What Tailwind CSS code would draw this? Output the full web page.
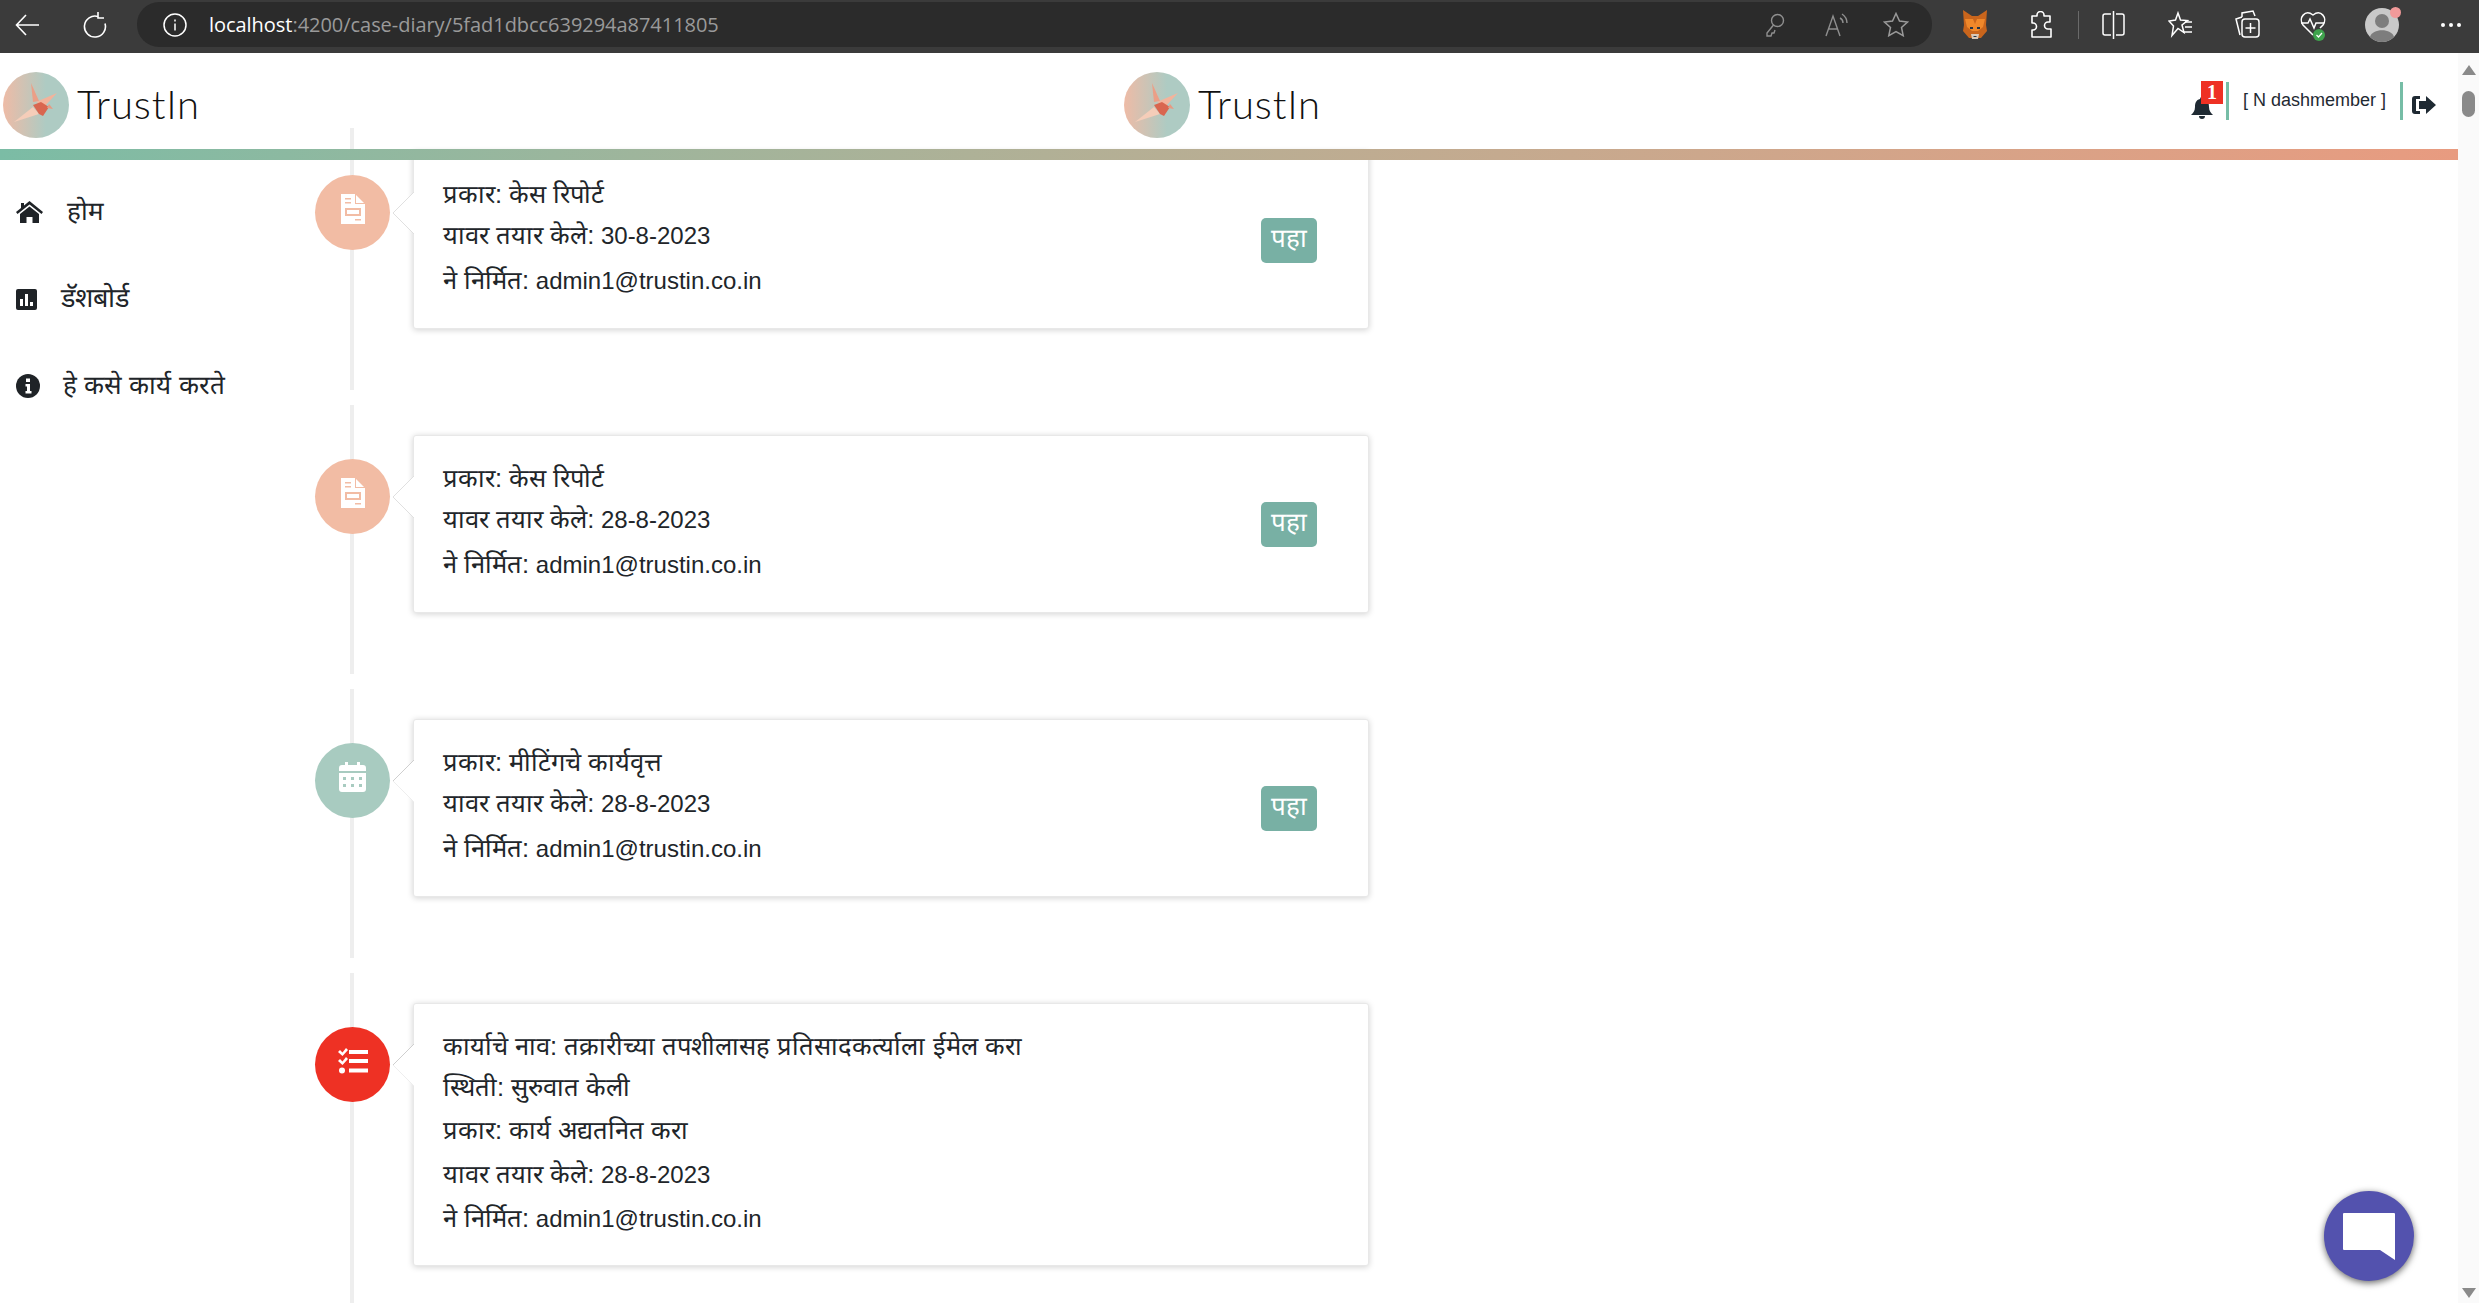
<!DOCTYPE html>
<html><head><meta charset="utf-8"><script src="https://cdn.jsdelivr.net/npm/@tailwindcss/browser@4"></script></head>
<body class="bg-white overflow-hidden">
<div class="w-[2479px] h-[1303px] overflow-hidden flex flex-col relative font-['Liberation_Sans',sans-serif] text-[#212529]">
  <!-- browser chrome -->
  <div class="h-[53px] shrink-0 bg-[#3b3b3b] flex items-center pb-[4px] text-white">
    <svg class="ml-[15px] w-[25px] h-[24px]" viewBox="0 0 25 24" fill="none" stroke="#fff" stroke-width="1.6"><path d="M24 12H2M11 2 1.5 12 11 22"/></svg>
    <svg class="ml-[42px] w-[25px] h-[26px]" viewBox="0 0 25 26" fill="none" stroke="#fff" stroke-width="1.6"><path d="M16 4.5a10.5 10.5 0 1 0 7 7"/><path d="M16 0v6h6"/></svg>
    <div class="ml-[30px] w-[1795px] h-[45px] rounded-[22px] bg-[#2b2b2b] flex items-center">
      <svg class="ml-[26px] w-[24px] h-[24px]" viewBox="0 0 24 24" fill="none" stroke="#fff" stroke-width="1.5"><circle cx="12" cy="12" r="11"/><path d="M12 10.5v7M12 6.5v2"/></svg>
      <span class="ml-[22px] w-[1556px] text-[20px] font-['Open_Sans',sans-serif] tracking-[-0.04px] whitespace-nowrap">localhost<span class="text-[#9a9a9a]">:4200/case-diary/5fad1dbcc639294a87411805</span></span>
      <svg class="w-[20px] h-[24px]" viewBox="0 0 20 24" fill="none" stroke="#8f8f8f" stroke-width="1.4"><circle cx="12.5" cy="7.5" r="6"/><path d="M8.5 12 2 20v3h4l1-3h2l1-3"/></svg>
      <svg class="ml-[40px] w-[24px] h-[24px]" viewBox="0 0 24 24" fill="none" stroke="#8f8f8f" stroke-width="1.4"><path d="M1 23 8 3l7 20M3.5 16h9"/><path d="M15 5c2 1 3 3 3 5M17 1c3 2 5 5 5 9"/></svg>
      <svg class="ml-[34px] w-[26px] h-[25px]" viewBox="0 0 26 25" fill="none" stroke="#9a9a9a" stroke-width="1.5"><path d="m13 1.5 3.5 7.6 8 .9-6 5.500 1.700 8.200L13 19.600 5.800 23.700l1.700-8.200-6-5.500 8-.9z"/></svg>
    </div>
    <svg class="ml-[31px] w-[24px] h-[30px]" viewBox="0 0 24 30"><path fill="#c9651c" d="M0 0 9 6h6l9-6-1 15 1 6-6 7H6l-6-7 1-6z"/><path fill="#f0882a" d="M2 9h8l2 5 2-5h8l-2 8-5 4h-6l-5-4z"/><path fill="#d8c8b8" d="M8 24h8l-1 5H9z"/><path fill="#233447" d="M7 17h3v2H7zM14 17h3v2h-3zM10.500 26h3v1h-3z"/></svg>
    <svg class="ml-[43px] w-[23px] h-[28px]" viewBox="0 0 23 28" fill="none" stroke="#fff" stroke-width="1.6"><path d="M7 5V4a3.500 3.500 0 0 1 7 0v1h6v6h-2a3 3 0 0 0 0 7h3v8H2v-7h1a3 3 0 0 0 0-7H2V5z" stroke-linejoin="round"/></svg>
    <div class="ml-[25px] w-[1px] h-[28px] bg-[#6a6a6a]"></div>
    <svg class="ml-[23px] w-[23px] h-[30px]" viewBox="0 0 23 30" fill="none" stroke="#fff" stroke-width="1.5"><path d="M9 4H3a2 2 0 0 0-2 2v17a2 2 0 0 0 2 2h6M14 4h6a2 2 0 0 1 2 2v17a2 2 0 0 1-2 2h-6M11.500 1v28"/></svg>
    <svg class="ml-[43px] w-[25px] h-[28px]" viewBox="0 0 25 28" fill="none" stroke="#fff" stroke-width="1.5"><path d="m10 2 2.500 7 7 .5-5.500 4.500 2 7.500-6-4-6 7 1.500-9.500L1 10l6.500-1z"/><path d="M17 11h7M17 16h7M15 21h9"/></svg>
    <svg class="ml-[42px] w-[25px] h-[30px]" viewBox="0 0 25 30" fill="none" stroke="#fff" stroke-width="1.500"><path d="M7 7V3l11-2 2 5M5 25 1 9l6-2"/><rect x="7" y="9" width="17" height="18" rx="3"/><path d="M15.500 13v10M10.500 18h10"/></svg>
    <svg class="ml-[40px] w-[26px] h-[34px]" viewBox="0 0 26 34" fill="none" stroke="#fff" stroke-width="1.500"><path d="M13 27 3 17C-2 10 5 1 13 7c8-6 15 3 10 10l-3 3"/><path d="M1 15h7l2-4 4 9 2-5h8"/><circle cx="19" cy="27" r="6" fill="#3fa34d" stroke="none"/><path d="m16.500 27 2 2 3.500-4" stroke-width="1.200"/></svg>
    <div class="ml-[39px] relative w-[34px] h-[34px]">
      <svg class="w-[34px] h-[34px]" viewBox="0 0 34 34"><circle cx="17" cy="17" r="17" fill="#c9c9c9"/><circle cx="17" cy="13" r="7" fill="#7d7d7d"/><path fill="#7d7d7d" d="M5 29c2-9 22-9 24 0a17 17 0 0 1-24 0"/></svg>
      <div class="absolute right-[-2px] top-[-1px] w-[11px] h-[11px] rounded-full bg-[#f19a9a]"></div>
    </div>
    <div class="ml-[42px] flex gap-[4px]"><div class="w-[4px] h-[4px] rounded-full bg-white"></div><div class="w-[4px] h-[4px] rounded-full bg-white"></div><div class="w-[4px] h-[4px] rounded-full bg-white"></div></div>
  </div>

  <div class="flex flex-1 min-h-0">
    <div class="w-[2458px] shrink-0 flex flex-col relative">
      <!-- header -->
      <div class="relative z-10 h-[96px] pt-[8px] shrink-0 flex items-center">
        <div class="ml-[3px] w-[1121px] flex items-center">
          <svg class="w-[66px] h-[66px]" viewBox="0 0 66 66"><defs><linearGradient id="g1"><stop offset="0" stop-color="#eebba6"/><stop offset="0.65" stop-color="#aecbc3"/></linearGradient></defs><circle cx="33" cy="33" r="33" fill="url(#g1)"/><path fill="#f5cdb9" d="m11 50 19-15 6 7z"/><path fill="#eb9f87" d="m28 11 2 19 6-1z"/><path fill="#f3b39b" d="M54 21 33 30l9 4z"/><path fill="#d9664f" d="m30 33 8-3 8 5-6 9-4-2z"/><path fill="#e79a82" d="m46 32 4 5-6-1z"/></svg>
          <span class="ml-[8px] mt-[-3px] text-[40px] tracking-[0.8px] font-light font-['Lato',sans-serif] text-[#111]">TrustIn</span>
        </div>
        <div class="flex items-center">
          <svg class="w-[66px] h-[66px]" viewBox="0 0 66 66"><defs><linearGradient id="g2"><stop offset="0" stop-color="#eebba6"/><stop offset="0.65" stop-color="#aecbc3"/></linearGradient></defs><circle cx="33" cy="33" r="33" fill="url(#g2)"/><path fill="#f5cdb9" d="m11 50 19-15 6 7z"/><path fill="#eb9f87" d="m28 11 2 19 6-1z"/><path fill="#f3b39b" d="M54 21 33 30l9 4z"/><path fill="#d9664f" d="m30 33 8-3 8 5-6 9-4-2z"/><path fill="#e79a82" d="m46 32 4 5-6-1z"/></svg>
          <span class="ml-[8px] mt-[-3px] text-[40px] tracking-[0.8px] font-light font-['Lato',sans-serif] text-[#111]">TrustIn</span>
        </div>
        <div class="ml-auto mr-[22px] flex items-center h-[38px] mt-[-9px]">
          <div class="relative w-[35px] h-[38px]">
            <svg class="absolute left-0 top-[15px] w-[22px] h-[22px]" viewBox="0 0 22 22" fill="#1f2a33"><path d="M11 0a2 2 0 0 1 2 2c4 1 5 4 5 8 0 4 2 6 4 8H0c2-2 4-4 4-8 0-4 1-7 5-8a2 2 0 0 1 2-2M8 19h6a3 3 0 0 1-6 0"/></svg>
            <div class="absolute left-[10px] top-[-1px] w-[22px] h-[23px] bg-[#ee3124] text-white text-[20px] leading-[23px] font-bold text-center font-['Liberation_Serif',serif]">1</div>
          </div>
          <div class="w-[3px] h-[38px] bg-[#76bda6]"></div>
          <span class="ml-[14px] w-[157px] text-[18px] text-[#1f2a33] whitespace-nowrap">[ N dashmember ]</span>
          <div class="w-[3px] h-[38px] bg-[#76bda6]"></div>
          <svg class="ml-[9px] mt-[8px] w-[24px] h-[20px]" viewBox="0 0 24 20" fill="#1f2a33"><path d="M8 1H3a3 3 0 0 0-3 3v12a3 3 0 0 0 3 3h5v-3H4V4h4zM14 1l10 9-10 9v-5H7V6h7z"/></svg>
        </div>
      </div>
      <div class="relative z-10 h-[11px] shrink-0 bg-gradient-to-r from-[#7bbca5] to-[#e89b80]"></div>

      <div class="flex flex-1 min-h-0">
        <!-- sidebar -->
        <nav class="w-[315px] shrink-0 text-[26px]">
          <div class="h-[52px] mt-[26px] flex items-center">
            <svg class="ml-[16px] w-[27px] h-[22px]" viewBox="0 0 27 22" fill="#1f2327"><path d="M13.500 0 27 11l-1.500 2L13.500 3.500 1.500 13 0 11l5-4V2h3v2.600zM13.500 5.500 23 13v9h-6.500v-6h-6v6H4v-9z"/></svg>
            <span class="ml-[24px] mt-[-2px]">होम</span>
          </div>
          <div class="h-[52px] mt-[35px] flex items-center">
            <svg class="ml-[16px] w-[21px] h-[21px]" viewBox="0 0 21 21"><rect width="21" height="21" rx="2" fill="#1f2327"/><path fill="#fff" d="M4 10h3v7H4zM9 5h3v12H9zM14 13h3v4h-3z"/></svg>
            <span class="ml-[24px] mt-[-2px] text-[27px]">डॅशबोर्ड</span>
          </div>
          <div class="h-[52px] mt-[35px] flex items-center">
            <svg class="ml-[16px] w-[24px] h-[24px]" viewBox="0 0 24 24"><circle cx="12" cy="12" r="12" fill="#1f2327"/><path fill="#fff" d="M10 4.500h4v3.500h-4zM9.500 10H14v7h1.500v2.500h-6V17H11v-4.500H9.500z"/></svg>
            <span class="ml-[23px] mt-[-2px]">हे कसे कार्य करते</span>
          </div>
        </nav>
        <!-- timeline -->
        <div class="mt-[-32px] w-[1054px] text-[24px]">
          <!-- item 1 -->
          <div class="relative pl-[98px] pt-[23px] pb-[61px] mb-[15px]">
            <div class="absolute left-[35px] top-0 bottom-0 w-[4px] bg-[#eeeeee]"></div>
            <div class="absolute left-0 top-[47px] w-[75px] h-[75px] pb-[8px] rounded-full bg-[#f2bca4] flex items-center justify-center">
              <svg class="w-[24px] h-[30px]" viewBox="0 0 24 30"><path fill="#fff" d="M0 0h14l10 10v20H0z"/><path fill="#f2bca4" d="M15 0v9h9v1H14V0zM4 4h6v1.500H4zM4 8h6v1.500H4zM4 14h16v8H4zM14 25h6v1.500h-6z"/><path fill="#fff" d="M6 16h12v4H6z"/></svg>
            </div>
            <div class="relative h-[178px] bg-white rounded-[3px] border border-[#e8e8e8] shadow-[0_1px_6px_rgba(0,0,0,0.18)] flex items-center justify-between">
              <svg class="absolute left-[-23px] top-[39px] w-[24px] h-[44px]" viewBox="0 0 24 44"><path d="M24 0 2 22l22 22z" fill="#fff"/><path d="M23 1 2 22l21 21" fill="none" stroke="#e0e0e0"/></svg>
              <div class="pl-[29px] pt-[21px] self-start">
                <div class="h-[42px] leading-[42px]"><span class="text-[25.5px]">प्रकार: केस रिपोर्ट</span></div>
                <div class="h-[41px] leading-[41px]"><span class="text-[25.5px]">यावर तयार केले:</span> 30-8-2023</div>
                <div class="h-[48px] leading-[48px]"><span class="text-[25.5px]">ने निर्मित:</span> admin1@trustin.co.in</div>
              </div>
              <div class="mr-[51px] w-[56px] h-[45px] pb-[4px] rounded-[5px] bg-[#78b0a4] text-white text-[26px] flex items-center justify-center">पहा</div>
            </div>
          </div>
          <!-- item 2 -->
          <div class="relative pl-[98px] pt-[30px] pb-[61px] mb-[15px]">
            <div class="absolute left-[35px] top-0 bottom-0 w-[4px] bg-[#eeeeee]"></div>
            <div class="absolute left-0 top-[54px] w-[75px] h-[75px] pb-[8px] rounded-full bg-[#f2bca4] flex items-center justify-center">
              <svg class="w-[24px] h-[30px]" viewBox="0 0 24 30"><path fill="#fff" d="M0 0h14l10 10v20H0z"/><path fill="#f2bca4" d="M15 0v9h9v1H14V0zM4 4h6v1.500H4zM4 8h6v1.500H4zM4 14h16v8H4zM14 25h6v1.500h-6z"/><path fill="#fff" d="M6 16h12v4H6z"/></svg>
            </div>
            <div class="relative h-[178px] bg-white rounded-[3px] border border-[#e8e8e8] shadow-[0_1px_6px_rgba(0,0,0,0.18)] flex items-center justify-between">
              <svg class="absolute left-[-23px] top-[39px] w-[24px] h-[44px]" viewBox="0 0 24 44"><path d="M24 0 2 22l22 22z" fill="#fff"/><path d="M23 1 2 22l21 21" fill="none" stroke="#e0e0e0"/></svg>
              <div class="pl-[29px] pt-[21px] self-start">
                <div class="h-[42px] leading-[42px]"><span class="text-[25.5px]">प्रकार: केस रिपोर्ट</span></div>
                <div class="h-[41px] leading-[41px]"><span class="text-[25.5px]">यावर तयार केले:</span> 28-8-2023</div>
                <div class="h-[48px] leading-[48px]"><span class="text-[25.5px]">ने निर्मित:</span> admin1@trustin.co.in</div>
              </div>
              <div class="mr-[51px] w-[56px] h-[45px] pb-[4px] rounded-[5px] bg-[#78b0a4] text-white text-[26px] flex items-center justify-center">पहा</div>
            </div>
          </div>
          <!-- item 3 -->
          <div class="relative pl-[98px] pt-[30px] pb-[61px] mb-[15px]">
            <div class="absolute left-[35px] top-0 bottom-0 w-[4px] bg-[#eeeeee]"></div>
            <div class="absolute left-0 top-[54px] w-[75px] h-[75px] pb-[7px] rounded-full bg-[#a8cbc0] flex items-center justify-center">
              <svg class="w-[27px] h-[30px]" viewBox="0 0 27 30"><path fill="#fff" d="M6 0h3v3h9V0h3v3h3a3 3 0 0 1 3 3v3H0V6a3 3 0 0 1 3-3h3zM0 11h27v16a3 3 0 0 1-3 3H3a3 3 0 0 1-3-3z"/><path fill="#a8cbc0" d="M4 15h3v3H4zM12 15h3v3h-3zM20 15h3v3h-3zM4 22h3v3H4zM12 22h3v3h-3zM20 22h3v3h-3z"/></svg>
            </div>
            <div class="relative h-[178px] bg-white rounded-[3px] border border-[#e8e8e8] shadow-[0_1px_6px_rgba(0,0,0,0.18)] flex items-center justify-between">
              <svg class="absolute left-[-23px] top-[39px] w-[24px] h-[44px]" viewBox="0 0 24 44"><path d="M24 0 2 22l22 22z" fill="#fff"/><path d="M23 1 2 22" fill="none" stroke="#cfcfcf"/><path d="M2 22l21 21" fill="none" stroke="#eeeeee"/></svg>
              <div class="pl-[29px] pt-[21px] self-start">
                <div class="h-[42px] leading-[42px]"><span class="text-[25.5px]">प्रकार: मीटिंगचे कार्यवृत्त</span></div>
                <div class="h-[41px] leading-[41px]"><span class="text-[25.5px]">यावर तयार केले:</span> 28-8-2023</div>
                <div class="h-[48px] leading-[48px]"><span class="text-[25.5px]">ने निर्मित:</span> admin1@trustin.co.in</div>
              </div>
              <div class="mr-[51px] w-[56px] h-[45px] pb-[4px] rounded-[5px] bg-[#78b0a4] text-white text-[26px] flex items-center justify-center">पहा</div>
            </div>
          </div>
          <!-- item 4 -->
          <div class="relative pl-[98px] pt-[30px] pb-[61px]">
            <div class="absolute left-[35px] top-0 bottom-0 w-[4px] bg-[#eeeeee]"></div>
            <div class="absolute left-0 top-[54px] w-[75px] h-[75px] pb-[7px] rounded-full bg-[#ee3124] flex items-center justify-center">
              <svg class="w-[30px] h-[26px]" viewBox="0 0 30 26" fill="#fff"><path d="M0 4 2 2l2.500 2.500L8 0l2 2-5.500 6zM0 13l2-2 2.500 2.500L8 9l2 2-5.500 6zM11 2h19v4H11zM11 11h19v4H11zM11 20.500h19v4H11z"/><circle cx="4" cy="22.500" r="3"/></svg>
            </div>
            <div class="relative h-[263px] bg-white rounded-[3px] border border-[#e8e8e8] shadow-[0_1px_6px_rgba(0,0,0,0.18)]">
              <svg class="absolute left-[-23px] top-[39px] w-[24px] h-[44px]" viewBox="0 0 24 44"><path d="M24 0 2 22l22 22z" fill="#fff"/><path d="M23 1 2 22" fill="none" stroke="#cfcfcf"/><path d="M2 22l21 21" fill="none" stroke="#eeeeee"/></svg>
              <div class="pl-[29px] pt-[21px]">
                <div class="h-[42px] leading-[42px]"><span class="text-[25.5px]">कार्याचे नाव: तक्रारीच्या तपशीलासह प्रतिसादकर्त्याला ईमेल करा</span></div>
                <div class="h-[41px] leading-[41px]"><span class="text-[25.5px]">स्थिती: सुरुवात केली</span></div>
                <div class="h-[44px] leading-[44px]"><span class="text-[25.5px]">प्रकार: कार्य अद्यतनित करा</span></div>
                <div class="h-[45px] leading-[45px]"><span class="text-[25.5px]">यावर तयार केले:</span> 28-8-2023</div>
                <div class="h-[42px] leading-[42px]"><span class="text-[25.5px]">ने निर्मित:</span> admin1@trustin.co.in</div>
              </div>
            </div>
          </div>
        </div>
      </div>
    </div>
    <!-- scrollbar -->
    <div class="w-[21px] shrink-0 bg-[#fafafa] flex flex-col items-center">
      <div class="mt-[12px] w-0 h-0 border-l-[7px] border-r-[7px] border-b-[10px] border-l-transparent border-r-transparent border-b-[#8a8a8a]"></div>
      <div class="mt-[16px] w-[13px] h-[26px] rounded-[7px] bg-[#8a8a8a]"></div>
      <div class="mt-auto mb-[5px] w-0 h-0 border-l-[7px] border-r-[7px] border-t-[10px] border-l-transparent border-r-transparent border-t-[#8a8a8a]"></div>
    </div>
  </div>
  <!-- chat -->
  <div class="absolute left-[2324px] top-[1191px] w-[90px] h-[90px] rounded-full bg-[#5352ae] shadow-[0_2px_7px_rgba(0,0,0,0.6)] flex items-center justify-center">
    <svg class="w-[52px] h-[47px]" viewBox="0 0 52 47"><path fill="#fff" d="M1 0h50a1 1 0 0 1 1 1v46L37 37H1a1 1 0 0 1-1-1V1a1 1 0 0 1 1-1z"/></svg>
  </div>
</div>
</body></html>
